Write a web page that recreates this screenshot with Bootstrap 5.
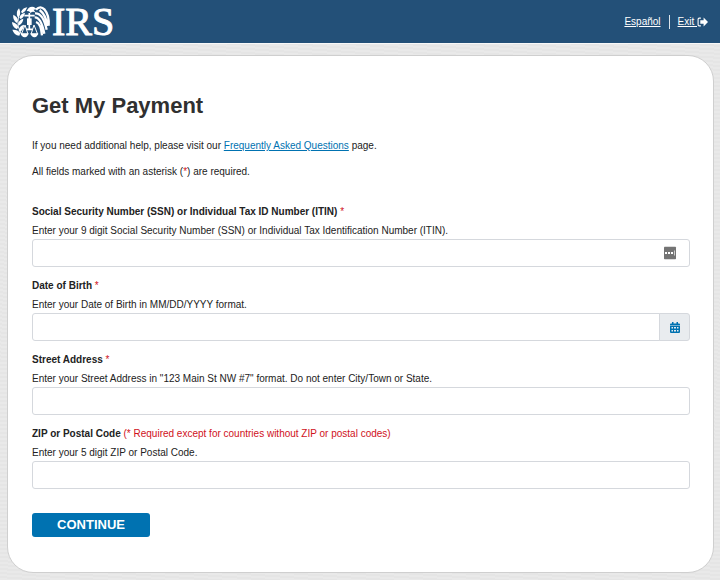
<!DOCTYPE html>
<html lang="en">
<head>
<meta charset="utf-8">
<meta name="viewport" content="width=device-width, initial-scale=1">
<title>Get My Payment</title>
<link href="https://cdn.jsdelivr.net/npm/bootstrap@5.3.0/dist/css/bootstrap.min.css" rel="stylesheet">
<style>
body{font-family:"Liberation Sans",Arial,sans-serif;font-size:10px;line-height:18px;color:#222;background:repeating-linear-gradient(4deg,#e9e9e9 0 2px,#e5e5e5 2px 4px)}
.site-header{background:#235078;border-bottom:1px solid #f8f8f8;height:44px}
.brand{font-family:"Liberation Serif","Times New Roman",serif;font-size:40px;line-height:42px;-webkit-text-stroke:1px #fff}
.site-header a{color:#fff}
.brand svg{width:40px;height:34px}
.divider{width:1px;height:14px;background:#dce5ec}
.panel{background:#fff;border:1px solid #cfcfcf;border-radius:26px;margin:11px 6px 7px 7px;padding:36px 23px 35px 24px}
h1{font-size:22px;line-height:28px;font-weight:700;margin:0 0 17px;color:#303030}
.intro p{margin:0 0 8px}
.panel a{color:#0072b1}
.fields{margin-top:20px;gap:8px}
.fields label{display:block;line-height:22px;font-weight:700}
.fields label span{font-weight:400}
.req{color:#d0111b}
.hint{line-height:16px}
.fields .form-control{height:28px;font-size:10px;border-color:#d5d8dd;border-radius:3px;padding:4px 8px}
.fill-btn{right:13px;width:13px;height:13px}
.date-btn{width:31px;background:#e9ecef;border:1px solid #d5d8dd;border-radius:3px;color:#0072b1}
.continue-btn{width:118px;height:24px;margin-top:24px;border-radius:3px;background:#0072b1;color:#fff;font-size:13px;line-height:24px;font-weight:700}
.continue-btn:hover{background:#005f94;color:#fff}
</style>
<script src="https://cdn.jsdelivr.net/npm/bootstrap@5.3.0/dist/js/bootstrap.bundle.min.js"></script>
</head>
<body>
<header class="site-header d-flex justify-content-between align-items-center px-2">
  <a class="brand d-flex align-items-center text-decoration-none ms-1" href="#">
    <svg viewBox="0 0 120 102" fill="#fff" aria-hidden="true">
      <path d="M22 92Q6 90 1 74Q17 73 25 84ZM15 73Q0 67 0 51Q14 55 19 65ZM14 54Q1 44 4 29Q17 35 18 47ZM17 36Q10 21 21 10Q28 23 22 34ZM20 78Q22 62 36 59Q36 71 25 80ZM18 58Q20 44 34 41Q33 53 22 61ZM22 38Q25 26 39 23Q37 36 26 42ZM27 21Q33 8 46 7Q42 19 31 25Z"/>
      <path d="M20 32Q12 66 31 91" fill="none" stroke="#fff" stroke-width="3"/>
      <path d="M44 18Q51 2 66 6L74 13L65 14L70 22Q61 17 56 24L51 19Z"/>
      <path d="M37 32H68M52 24V76M42 73H62" fill="none" stroke="#fff" stroke-width="5"/>
      <path d="M39 60L28 88H48ZM66 60L57 88H77Z" fill="none" stroke="#fff" stroke-width="3"/>
      <path d="M26 85H50Q46 98 38 97Q28 96 26 85ZM55 85H79Q75 98 67 97Q58 96 55 85Z"/>
      <path d="M45 40H59V60H45Z"/>
      <path d="M72 14Q85 0 98 14Q112 30 110 62M69 25Q93 23 104 74M68 37Q87 36 97 86M72 51Q87 56 90 91M83 15Q101 29 107 63" fill="none" stroke="#fff" stroke-width="7"/>
    </svg><span>IRS</span>
  </a>
  <nav class="d-flex align-items-center gap-2 me-1" aria-label="Account">
    <a href="#">Español</a><span class="divider"></span>
    <a class="d-flex align-items-center" href="#">Exit&nbsp;<svg width="11" height="10" viewBox="0 0 20 18" aria-hidden="true"><path d="M7 2H4Q2 2 2 4V14Q2 16 4 16H7" fill="none" stroke="#fff" stroke-width="2"/><path d="M6 6H12V1L20 9L12 17V12H6Z" fill="#fff"/></svg></a>
  </nav>
</header>
<main class="panel">
  <h1>Get My Payment</h1>
  <div class="intro">
    <p>If you need additional help, please visit our <a href="#">Frequently Asked Questions</a> page.</p>
    <p>All fields marked with an asterisk (<span class="req">*</span>) are required.</p>
  </div>
  <form>
    <div class="fields d-flex flex-column">
      <div>
        <label for="ssn">Social Security Number (SSN) or Individual Tax ID Number (ITIN) <span class="req">*</span></label>
        <div class="hint" id="ssn-hint">Enter your 9 digit Social Security Number (SSN) or Individual Tax Identification Number (ITIN).</div>
        <div class="position-relative">
          <input class="form-control" type="text" id="ssn" aria-describedby="ssn-hint" required>
          <button class="fill-btn btn p-0 border-0 d-flex position-absolute top-50 translate-middle-y" type="button" aria-label="Fill saved value"><svg width="13" height="13" viewBox="0 0 13 13"><rect width="12" height="13" rx="1" fill="#747474"/><path d="M1 6.500h2M4 6.500h2M7 6.500h2" stroke="#fff" stroke-width="2"/><path d="M10.500 4v5" stroke="#ccc"/></svg></button>
        </div>
      </div>
      <div>
        <label for="dob">Date of Birth <span class="req">*</span></label>
        <div class="hint" id="dob-hint">Enter your Date of Birth in MM/DD/YYYY format.</div>
        <div class="input-group flex-nowrap">
          <input class="form-control" type="text" id="dob" aria-describedby="dob-hint" required>
          <button class="date-btn btn p-0 d-flex align-items-center justify-content-center" type="button" aria-label="Choose a date"><svg width="10" height="11" viewBox="0 0 20 22" fill="currentColor"><path d="M4 0H7V3H13V0H16V3H18Q20 3 20 5V7H0V5Q0 3 2 3H4Z"/><path fill-rule="evenodd" d="M0 8H20V20Q20 22 18 22H2Q0 22 0 20ZM3 10V13H6V10ZM8 10V13H12V10ZM14 10V13H17V10ZM3 16V19H6V16ZM8 16V19H12V16ZM14 16V19H17V16Z"/></svg></button>
        </div>
      </div>
      <div>
        <label for="street">Street Address <span class="req">*</span></label>
        <div class="hint" id="street-hint">Enter your Street Address in "123 Main St NW #7" format. Do not enter City/Town or State.</div>
        <input class="form-control" type="text" id="street" aria-describedby="street-hint" required>
      </div>
      <div>
        <label for="zip">ZIP or Postal Code <span class="req">(* Required except for countries without ZIP or postal codes)</span></label>
        <div class="hint" id="zip-hint">Enter your 5 digit ZIP or Postal Code.</div>
        <input class="form-control" type="text" id="zip" aria-describedby="zip-hint">
      </div>
    </div>
    <button class="continue-btn btn border-0 p-0 d-block" type="submit">CONTINUE</button>
  </form>
</main>
</body>
</html>
